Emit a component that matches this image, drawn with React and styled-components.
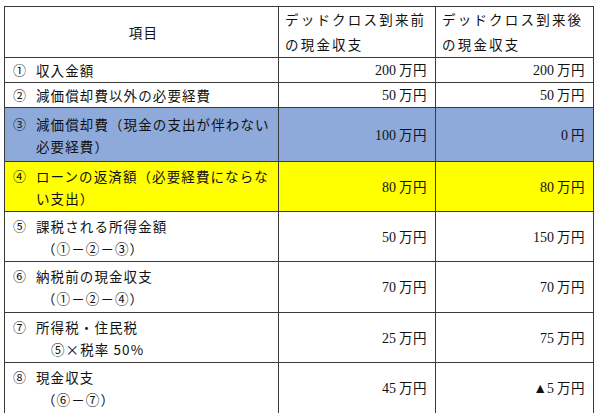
import React from "react";
import styled, { createGlobalStyle } from "styled-components";

const Global = createGlobalStyle`
  html, body { margin: 0; padding: 0; background: #ffffff; }
  body { font-family: "Noto Sans CJK JP", "Noto Sans", sans-serif; color: #111; }
`;

const Page = styled.div`
  width: 600px;
  height: 413px;
  padding: 6px 0 0 4px;
  box-sizing: border-box;
  background: #fff;
  overflow: hidden;
`;

const Table = styled.table`
  border-collapse: collapse;
  table-layout: fixed;
  width: 589px;
  font-size: 13.5px;
  letter-spacing: 1.1px;
`;

const Col = styled.col`
  width: ${(p) => p.$w}px;
`;

const Row = styled.tr`
  height: ${(p) => p.$h}px;
  background: ${(p) => p.$bg || "#ffffff"};
`;

const Cell = styled.td`
  border: 1px solid #3a3a3a;
  padding: 0 4px 0 8px;
  vertical-align: middle;
  line-height: 22px;
  font-weight: 400;
  white-space: nowrap;
  overflow: hidden;
`;

const HeadCell = styled(Cell)`
  line-height: 25px;
  text-align: ${(p) => (p.$center ? "center" : "left")};
  padding: 0 2px 0 6px;
  letter-spacing: ${(p) => (p.$center ? "1.2px" : "2.2px")};
`;

const Amount = styled(Cell)`
  text-align: right;
  padding-right: 8px;
  font-family: "Liberation Serif", "Noto Sans CJK JP", serif;
  font-size: 14px;
  letter-spacing: 0;
`;

const Yen = styled.span`
  font-family: "Noto Sans CJK JP", sans-serif;
  font-size: 13.5px;
  letter-spacing: 0.5px;
  margin-left: 3px;
`;

const Label = styled.div`
  display: flex;
  align-items: flex-start;
`;

const Num = styled.span`
  flex: 0 0 23px;
  font-size: 13px;
`;

const Text = styled.div`
  flex: 1;
`;

const Sub = styled.div`
  padding-left: ${(p) => p.$indent}px;
`;

const rows = [
  { n: "①", lines: ["収入金額"], a: "200", b: "200", h: 24 },
  { n: "②", lines: ["減価償却費以外の必要経費"], a: "50", b: "50", h: 23 },
  { n: "③", lines: ["減価償却費（現金の支出が伴わない", "必要経費）"], a: "100", b: "0", h: 54, bg: "#8eaadb", plainB: true },
  { n: "④", lines: ["ローンの返済額（必要経費にならな", "い支出）"], a: "80", b: "80", h: 50, bg: "#ffff00" },
  { n: "⑤", lines: ["課税される所得金額"], sub: "（①－②－③）", ind: 6, a: "50", b: "150", h: 50 },
  { n: "⑥", lines: ["納税前の現金収支"], sub: "（①－②－④）", ind: 6, a: "70", b: "70", h: 51 },
  { n: "⑦", lines: ["所得税・住民税"], sub: "⑤×税率 50%", ind: 15, a: "25", b: "75", h: 50 },
  { n: "⑧", lines: ["現金収支"], sub: "（⑥－⑦）", ind: 6, a: "45", b: "▲5", h: 51 },
];

export default function App() {
  return (
    <Page>
      <Global />
      <Table>
        <colgroup>
          <Col $w={274} />
          <Col $w={157} />
          <Col $w={158} />
        </colgroup>
        <tbody>
          <Row $h={51}>
            <HeadCell $center>項目</HeadCell>
            <HeadCell>
              デッドクロス到来前
              <br />
              の現金収支
            </HeadCell>
            <HeadCell>
              デッドクロス到来後
              <br />
              の現金収支
            </HeadCell>
          </Row>
          {rows.map((r) => (
            <Row key={r.n} $h={r.h} $bg={r.bg}>
              <Cell>
                <Label>
                  <Num>{r.n}</Num>
                  <Text>
                    {r.lines.map((l) => (
                      <div key={l}>{l}</div>
                    ))}
                    {r.sub && <Sub $indent={r.ind}>{r.sub}</Sub>}
                  </Text>
                </Label>
              </Cell>
              <Amount>
                {r.a}
                <Yen>万円</Yen>
              </Amount>
              <Amount>
                {r.b}
                <Yen>{r.plainB ? "円" : "万円"}</Yen>
              </Amount>
            </Row>
          ))}
        </tbody>
      </Table>
    </Page>
  );
}
